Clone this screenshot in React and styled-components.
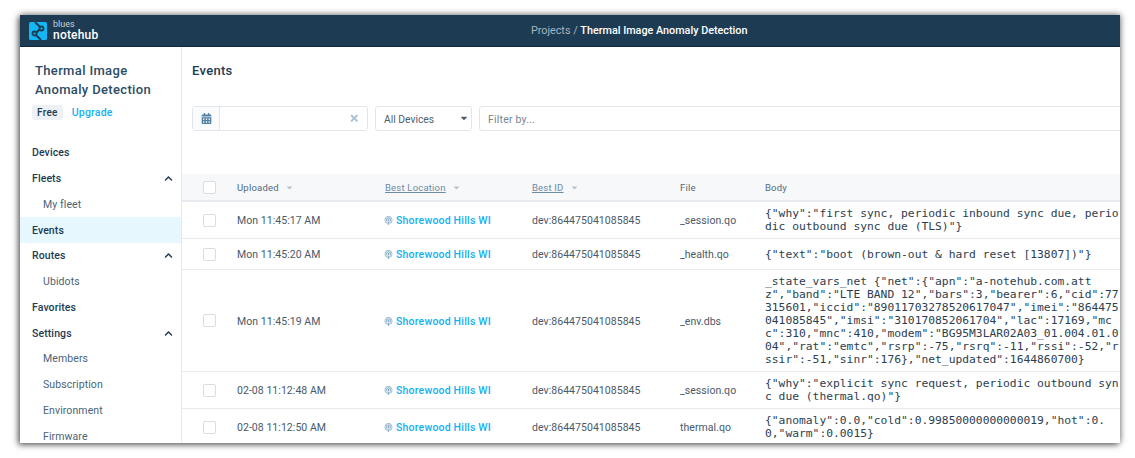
import React from "react"
import styled, { createGlobalStyle } from "styled-components"
import { FaCalendarAlt, FaPodcast, FaTimes, FaCaretDown, FaChevronUp } from "react-icons/fa"

const GlobalStyle = createGlobalStyle`
  html, body {
    margin: 0;
    padding: 0;
    background: #fff;
  }
`

const Page = styled.div`
  width: 1135px;
  height: 458px;
  box-sizing: border-box;
  padding: 15px 15px 15px 20px;
  overflow: hidden;
  font-family: "Roboto", "Liberation Sans", sans-serif;
`

const Frame = styled.div`
  width: 1100px;
  height: 428px;
  display: flex;
  flex-direction: column;
  background: #fff;
  overflow: hidden;
  box-shadow: -2px 2px 6px rgba(20, 20, 20, 0.6), 1px -1px 6px rgba(20, 20, 20, 0.4);
`

const TopBar = styled.header`
  flex: 0 0 32px;
  box-sizing: border-box;
  display: flex;
  align-items: center;
  background: #1e3b54;
  border-bottom: 1px solid #12263a;
`

const Brand = styled.div`
  display: flex;
  align-items: center;
  gap: 6px;
  padding-left: 9px;
`

const BrandText = styled.div`
  display: flex;
  flex-direction: column;
  padding-bottom: 2px;
  color: #fff;
`

const BrandSmall = styled.span`
  font-size: 9px;
  line-height: 10px;
  color: #c4d0da;
`

const BrandBig = styled.span`
  font-size: 12px;
  line-height: 12px;
  font-weight: 500;
  letter-spacing: 0.2px;
`

const Crumbs = styled.div`
  flex: 1;
  text-align: center;
  font-size: 10.8px;
  font-weight: 500;
  color: #fff;
  padding-left: 60px;
`

const CrumbMuted = styled.span`
  color: #a7b3be;
  font-weight: 400;
`

const Body = styled.div`
  flex: 1;
  display: flex;
  min-height: 0;
`

const Sidebar = styled.aside`
  flex: 0 0 161px;
  border-right: 1px solid #e6eaee;
  overflow: hidden;
`

const ProjectInfo = styled.div`
  padding: 14px 0 0 12px;
  height: 93px;
  box-sizing: border-box;
`

const ProjectTitle = styled.h2`
  margin: 0 0 0 3px;
  font-size: 13px;
  line-height: 19px;
  font-weight: 500;
  letter-spacing: 0.35px;
  color: #2c4c66;
`

const PlanRow = styled.div`
  display: flex;
  align-items: center;
  gap: 9px;
  margin-top: 6px;
`

const PlanBadge = styled.span`
  background: #eef1f4;
  border-radius: 3px;
  padding: 0 5px;
  height: 15px;
  line-height: 15px;
  font-size: 10px;
  font-weight: 500;
  letter-spacing: 0.3px;
  color: #1e3b54;
`

const UpgradeLink = styled.a`
  font-size: 10.5px;
  font-weight: 500;
  letter-spacing: 0.2px;
  color: #12b1f2;
`

const NavList = styled.nav`
  display: flex;
  flex-direction: column;
`

const NavItem = styled.div`
  height: 25.75px;
  flex: 0 0 25.75px;
  display: flex;
  align-items: center;
  justify-content: space-between;
  box-sizing: border-box;
  padding: 0 8px 0 ${(p) => (p.$sub ? "23px" : "12px")};
  font-size: 10.5px;
  letter-spacing: 0.1px;
  font-weight: ${(p) => (p.$sub ? 400 : 500)};
  color: ${(p) => (p.$sub ? "#4a6478" : "#1e3b54")};
  background: ${(p) => (p.$active ? "#e6f7fe" : "transparent")};
`

const Main = styled.main`
  flex: 1;
  min-width: 0;
  overflow: hidden;
`

const PageTitle = styled.h1`
  margin: 0;
  padding: 15px 0 0 10px;
  height: 59px;
  box-sizing: border-box;
  font-size: 13px;
  line-height: 17px;
  font-weight: 500;
  letter-spacing: 0.3px;
  color: #1e3b54;
`

const FilterBar = styled.div`
  display: flex;
  gap: 7px;
  padding-left: 10px;
  height: 25px;
  width: 1000px;
`

const DateGroup = styled.div`
  flex: 0 0 176px;
  box-sizing: border-box;
  display: flex;
  align-items: center;
  border: 1px solid #e2e6ea;
  border-radius: 3px;
`

const DateIcon = styled.div`
  flex: 0 0 26px;
  align-self: stretch;
  display: flex;
  align-items: center;
  justify-content: center;
  border-right: 1px solid #e2e6ea;
  background: #fafbfc;
  color: #4f7fa5;
  font-size: 11px;
`

const DateInput = styled.div`
  flex: 1;
  display: flex;
  justify-content: flex-end;
  padding-right: 8px;
  color: #a9c1d2;
  font-size: 10.5px;
`

const SelectBox = styled.div`
  flex: 0 0 97px;
  box-sizing: border-box;
  display: flex;
  align-items: center;
  justify-content: space-between;
  padding: 1px 2px 0 8px;
  border: 1px solid #e2e6ea;
  border-radius: 3px;
  font-size: 10.3px;
  color: #4d5f6e;
  svg {
    color: #50606e;
    font-size: 10px;
    margin-top: -3px;
  }
`

const FilterInput = styled.div`
  flex: 1;
  box-sizing: border-box;
  display: flex;
  align-items: center;
  padding: 1px 0 0 8px;
  border: 1px solid #e2e6ea;
  border-radius: 3px;
  font-size: 10.5px;
  letter-spacing: 0.2px;
  color: #78858f;
`

const Table = styled.div`
  margin-top: 43px;
  width: 938px;
`

const Row = styled.div`
  display: grid;
  grid-template-columns: 55px 148px 147px 148px 85px 1fr;
  align-items: center;
  min-height: 31px;
  box-sizing: border-box;
  border-bottom: 1px solid #e6eaee;
  padding: 5px 0;
`

const HeadRow = styled(Row)`
  min-height: 28px;
  padding: 0;
  background: #f6f8fa;
  border-bottom: 2px solid #e6eaee;
`

const HeadCell = styled.div`
  display: flex;
  align-items: center;
  gap: 6px;
  font-size: 9.5px;
  letter-spacing: 0.2px;
  color: ${(p) => (p.$sortable ? "#6d8ba3" : "#516b80")};
  span {
    text-decoration: ${(p) => (p.$sortable ? "underline" : "none")};
  }
  svg {
    color: #b8c2cb;
    font-size: 9px;
  }
`

const CheckCell = styled.div`
  padding-left: 21px;
`

const CheckBox = styled.div`
  width: 13px;
  height: 13px;
  box-sizing: border-box;
  border: 1px solid #d9dde1;
  border-radius: 2px;
  background: #fff;
`

const Cell = styled.div`
  padding-top: 1px;
  font-size: 10.5px;
  letter-spacing: 0.05px;
  color: #48596a;
  white-space: nowrap;
`

const LocationCell = styled(Cell)`
  display: flex;
  align-items: center;
  gap: 3px;
  margin-left: -1px;
  letter-spacing: 0.2px;
  color: #12b1f2;
  font-weight: 500;
  svg {
    color: #8fb3c9;
    font-size: 9px;
  }
`

const BodyCell = styled.div`
  font-family: "DejaVu Sans Mono", "Liberation Mono", monospace;
  font-size: 11.3px;
  line-height: 13px;
  color: #2c3e50;
  white-space: pre;
`

const navItems = [
  { label: "Devices" },
  { label: "Fleets", open: true },
  { label: "My fleet", sub: true },
  { label: "Events", active: true },
  { label: "Routes", open: true },
  { label: "Ubidots", sub: true },
  { label: "Favorites" },
  { label: "Settings", open: true },
  { label: "Members", sub: true },
  { label: "Subscription", sub: true },
  { label: "Environment", sub: true },
  { label: "Firmware", sub: true },
]

const events = [
  {
    time: "Mon 11:45:17 AM",
    file: "_session.qo",
    body: [
      '{"why":"first sync, periodic inbound sync due, perio',
      'dic outbound sync due (TLS)"}',
    ],
  },
  {
    time: "Mon 11:45:20 AM",
    file: "_health.qo",
    body: ['{"text":"boot (brown-out & hard reset [13807])"}'],
  },
  {
    time: "Mon 11:45:19 AM",
    file: "_env.dbs",
    body: [
      '_state_vars_net {"net":{"apn":"a-notehub.com.att',
      'z","band":"LTE BAND 12","bars":3,"bearer":6,"cid":77',
      '315601,"iccid":"89011703278520617047","imei":"864475',
      '041085845","imsi":"310170852061704","lac":17169,"mc',
      'c":310,"mnc":410,"modem":"BG95M3LAR02A03_01.004.01.0',
      '04","rat":"emtc","rsrp":-75,"rsrq":-11,"rssi":-52,"r',
      'ssir":-51,"sinr":176},"net_updated":1644860700}',
    ],
  },
  {
    time: "02-08 11:12:48 AM",
    file: "_session.qo",
    body: [
      '{"why":"explicit sync request, periodic outbound syn',
      'c due (thermal.qo)"}',
    ],
  },
  {
    time: "02-08 11:12:50 AM",
    file: "thermal.qo",
    body: [
      '{"anomaly":0.0,"cold":0.99850000000000019,"hot":0.',
      '0,"warm":0.0015}',
    ],
  },
]

const Logo = () => (
  <svg width="18" height="18" viewBox="0 0 18 18">
    <rect width="18" height="18" rx="1.5" fill="#12b8f5" />
    <path d="M6 0l6.500 6.500M5.500 11.500L12 18M7 11l4-4" fill="none" stroke="#1e3b54" strokeWidth="2" />
    <circle cx="12.500" cy="6.500" r="2" fill="#12b8f5" stroke="#1e3b54" strokeWidth="1.800" />
    <circle cx="5.500" cy="11.500" r="2" fill="#12b8f5" stroke="#1e3b54" strokeWidth="1.800" />
  </svg>
)

const App = () => {
  return (
    <>
      <GlobalStyle />
      <Page>
        <Frame>
          <TopBar>
            <Brand>
              <Logo />
              <BrandText>
                <BrandSmall>blues</BrandSmall>
                <BrandBig>notehub</BrandBig>
              </BrandText>
            </Brand>
            <Crumbs>
              <CrumbMuted>Projects / </CrumbMuted>Thermal Image Anomaly Detection
            </Crumbs>
          </TopBar>
          <Body>
            <Sidebar>
              <ProjectInfo>
                <ProjectTitle>
                  Thermal Image
                  <br />
                  Anomaly Detection
                </ProjectTitle>
                <PlanRow>
                  <PlanBadge>Free</PlanBadge>
                  <UpgradeLink>Upgrade</UpgradeLink>
                </PlanRow>
              </ProjectInfo>
              <NavList>
                {navItems.map((item) => (
                  <NavItem key={item.label} $sub={item.sub} $active={item.active}>
                    {item.label}
                    {item.open && <FaChevronUp size={9} />}
                  </NavItem>
                ))}
              </NavList>
            </Sidebar>
            <Main>
              <PageTitle>Events</PageTitle>
              <FilterBar>
                <DateGroup>
                  <DateIcon>
                    <FaCalendarAlt />
                  </DateIcon>
                  <DateInput>
                    <FaTimes />
                  </DateInput>
                </DateGroup>
                <SelectBox>
                  All Devices
                  <FaCaretDown />
                </SelectBox>
                <FilterInput>Filter by...</FilterInput>
              </FilterBar>
              <Table>
                <HeadRow>
                  <CheckCell>
                    <CheckBox />
                  </CheckCell>
                  <HeadCell>
                    Uploaded <FaCaretDown />
                  </HeadCell>
                  <HeadCell $sortable>
                    <span>Best Location</span> <FaCaretDown />
                  </HeadCell>
                  <HeadCell $sortable>
                    <span>Best ID</span> <FaCaretDown />
                  </HeadCell>
                  <HeadCell>File</HeadCell>
                  <HeadCell>Body</HeadCell>
                </HeadRow>
                {events.map((ev) => (
                  <Row key={ev.time}>
                    <CheckCell>
                      <CheckBox />
                    </CheckCell>
                    <Cell>{ev.time}</Cell>
                    <LocationCell>
                      <FaPodcast />
                      Shorewood Hills WI
                    </LocationCell>
                    <Cell>dev:864475041085845</Cell>
                    <Cell>{ev.file}</Cell>
                    <BodyCell>
                      {ev.body.map((line) => (
                        <div key={line}>{line}</div>
                      ))}
                    </BodyCell>
                  </Row>
                ))}
              </Table>
            </Main>
          </Body>
        </Frame>
      </Page>
    </>
  )
}

export default App
